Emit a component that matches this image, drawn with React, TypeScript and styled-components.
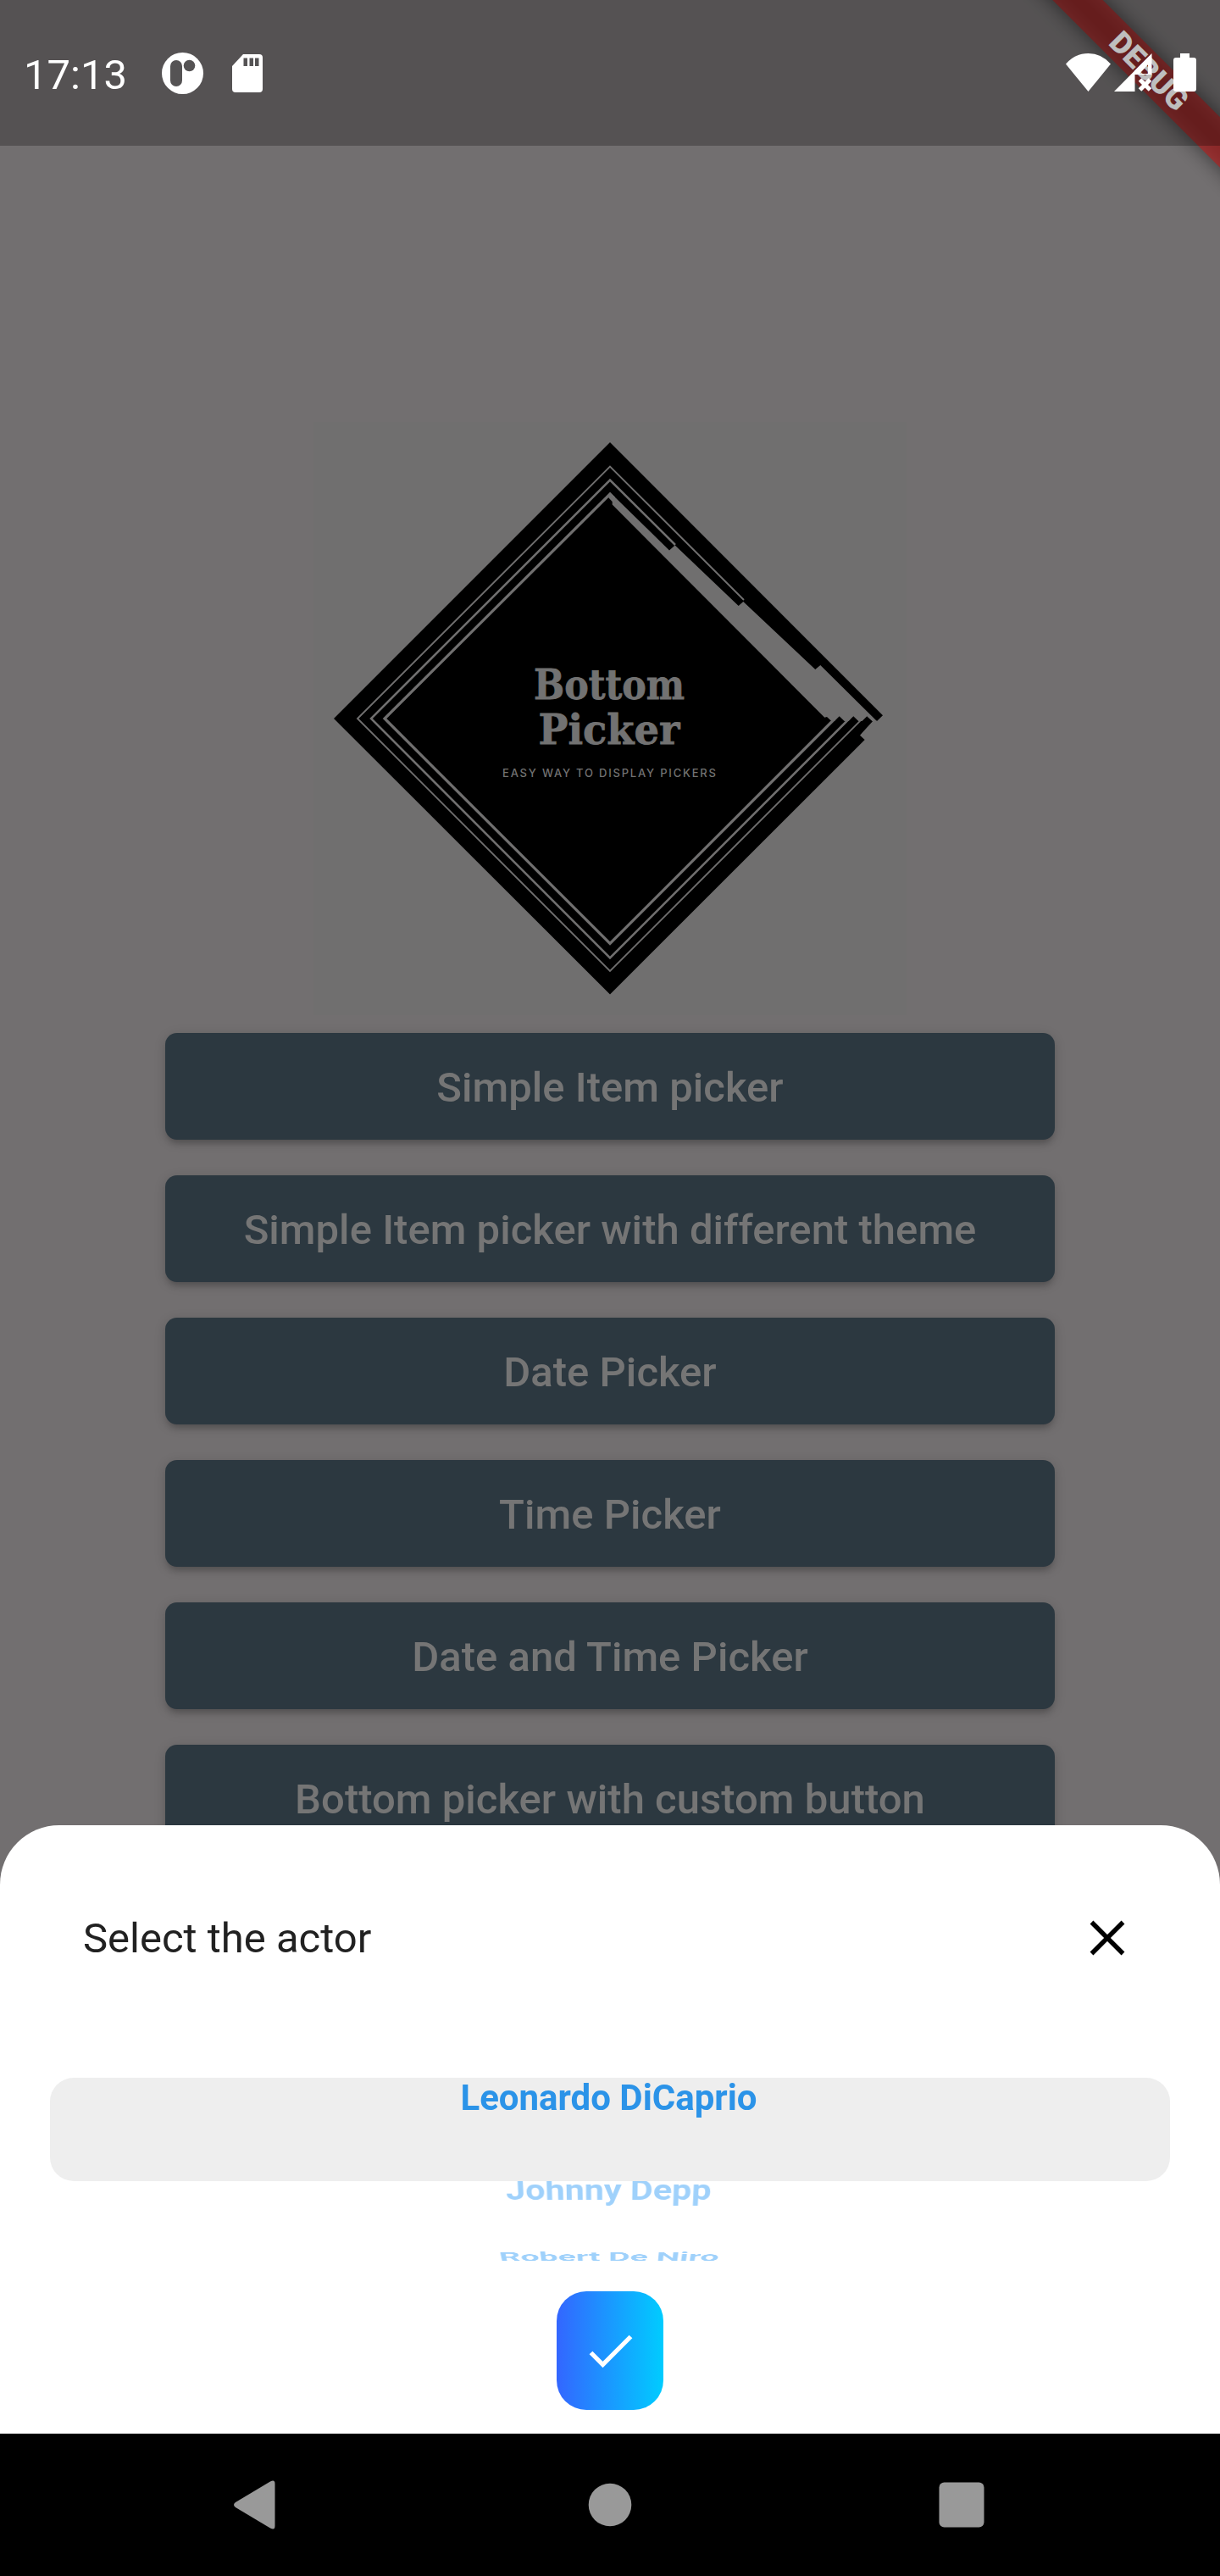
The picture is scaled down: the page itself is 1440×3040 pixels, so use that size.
import React from "react";
import styled, { createGlobalStyle, css } from "styled-components";

const GlobalStyle = createGlobalStyle`
  * { box-sizing: border-box; }
  body { margin: 0; background: #000; font-family: Roboto, sans-serif; }
`;

const Phone = styled.div`
  position: relative;
  display: flex;
  flex-direction: column;
  width: 1440px;
  height: 3040px;
  overflow: hidden;
  background: #726f70;
`;

const StatusBar = styled.header`
  position: relative;
  z-index: 2;
  display: flex;
  justify-content: space-between;
  flex: none;
  height: 172px;
  background: rgba(0, 0, 0, 0.254);
`;

const StatusGroup = styled.div`
  display: flex;
  align-items: center;
  height: 172px;
`;

const Clock = styled.time`
  margin-top: 5px;
  margin-left: 28px;
  width: 163px;
  color: #fff;
  font-size: 49px;
  line-height: 58px;
  white-space: nowrap;
`;

const StatusIcon = styled.svg<{ $gap: number }>`
  flex: none;
  display: block;
  margin-left: ${(p) => p.$gap}px;
`;

const DebugCorner = styled.div`
  position: absolute;
  top: 0;
  right: 0;
  z-index: 1;
  width: 300px;
  height: 300px;
  overflow: hidden;
`;

const DebugRibbon = styled.div`
  position: absolute;
  top: 63px;
  left: 6px;
  width: 420px;
  height: 42px;
  transform: rotate(45deg);

  &::before {
    content: "";
    position: absolute;
    inset: 0;
    background: rgba(0, 0, 0, 0.5);
    filter: blur(12px);
  }
`;

const DebugLabel = styled.div`
  position: relative;
  height: 42px;
  background: rgba(183, 28, 28, 0.627);
  color: #fff;
  font-size: 35.7px;
  font-weight: 900;
  line-height: 43px;
  text-align: center;
`;

const Page = styled.main`
  display: flex;
  flex-direction: column;
  align-items: center;
  flex: none;
  height: 1982px;
  padding-top: 326px;
  overflow: hidden;
`;

const Logo = styled.svg`
  display: block;
  flex: none;
  margin-bottom: 21px;
`;

const ButtonList = styled.div`
  display: flex;
  flex-direction: column;
  gap: 42px;
`;

const PickerButton = styled.button`
  flex: none;
  width: 1050px;
  height: 126px;
  padding: 3px 0 0;
  border: 0;
  border-radius: 14px;
  background: #2c3840;
  color: #757575;
  font: 500 49px/58px Roboto, sans-serif;
  letter-spacing: 0.03px;
  box-shadow: 0 7px 7px -3px rgba(0, 0, 0, 0.18), 0 3px 14px rgba(0, 0, 0, 0.16);
`;

const Sheet = styled.section`
  position: absolute;
  top: 2154px;
  left: 0;
  display: flex;
  flex-direction: column;
  align-items: center;
  width: 1440px;
  height: 718px;
  border-radius: 70px 70px 0 0;
  background: #fff;
`;

const SheetHeader = styled.div`
  display: flex;
  align-items: center;
  justify-content: space-between;
  flex: none;
  width: 100%;
  height: 298px;
  padding: 0 112px 30px 98px;
`;

const SheetTitle = styled.h2`
  margin: 0;
  color: #212121;
  font-size: 49px;
  font-weight: 400;
  line-height: 58px;
`;

const CloseIcon = styled.svg`
  display: block;
  margin-bottom: 2px;
`;

const Wheel = styled.div`
  display: flex;
  flex-direction: column;
  align-items: center;
  flex: none;
  width: 1322px;
  height: 218px;
`;

const SelectedBand = styled.div`
  position: relative;
  z-index: 1;
  width: 100%;
  height: 122px;
  flex: none;
  border-radius: 28px;
  background: #eeeeee;
`;

const actorText = css`
  padding-right: 3px;
  font-size: 42px;
  font-weight: 700;
  line-height: 48px;
  text-align: center;
  white-space: nowrap;
`;

const SelectedActor = styled.div`
  ${actorText}
  color: #2b93e8;
`;

const FadedBand = styled.div`
  display: flex;
  flex-direction: column;
  align-items: center;
  flex: none;
  width: 100%;
  height: 96px;
`;

const FadedActor = styled.div<{ $height: number; $tilt: number; $lift: number; $spread: number }>`
  ${actorText}
  flex: none;
  height: ${(p) => p.$height}px;
  margin-top: ${(p) => p.$lift}px;
  color: #9fd1fb;
  transform: scaleX(${(p) => p.$spread}) perspective(1550px) rotateX(-${(p) => p.$tilt}deg);
  transform-origin: 50% 0;
`;

const ConfirmButton = styled.button`
  display: flex;
  align-items: center;
  justify-content: center;
  flex: none;
  width: 126px;
  height: 140px;
  margin-top: 34px;
  padding: 1px 0 0 1px;
  border: 0;
  border-radius: 35px;
  background: linear-gradient(90deg, #3366ff, #00ccff);
`;

const NavBar = styled.nav`
  display: grid;
  grid-template-columns: 1fr auto 1fr;
  align-items: center;
  flex: none;
  height: 168px;
  margin-top: auto;
  padding: 0 273px;
  background: #000;
`;

const RecentsIcon = styled.svg`
  justify-self: end;
  margin-right: 5px;
`;

const BUTTONS = [
  "Simple Item picker",
  "Simple Item picker with different theme",
  "Date Picker",
  "Time Picker",
  "Date and Time Picker",
  "Bottom picker with custom button",
];

const LINE = "#706f6f";

const BottomPickerLogo = () => (
  <Logo width="700" height="700" viewBox="370 498 700 700">
    <rect x="370" y="498" width="700" height="700" fill={LINE} />
    <path
      d="M720 522L1042 844.300L1035 851L1023.300 845.300L1030 851.300L1015 867.700L1020.700 873L720 1173.500L394 848Z"
      fill="#000"
    />
    <g fill="none" stroke={LINE}>
      <path d="M878 708L720 550.500L422 848L720 1146L1019 847" strokeWidth="1.900" />
      <path d="M797 643L720 566.500L438 848L720 1130.500L1003 847.500" strokeWidth="2.500" />
      <path d="M725 588L720 583L454 848L720 1113.500L984.500 849" strokeWidth="3.200" />
    </g>
    <path
      d="M720 581L790 649.500L796.700 643.500L871.700 715L877.300 710L962.300 790L968.300 785L1035 851L1031 853L1030 851.300L1023.300 845.300L1017.500 851L1013.300 851L1007.300 845.300L1001.500 851L996.700 851L990.700 845.300L985 851L980.300 850L976 846L973.300 846.700L722.700 595.500L722.700 592L718 587Z"
      fill={LINE}
    />
    <g fill="#727272" textAnchor="middle">
      <g fontFamily="DejaVu Serif, serif" fontSize="48" fontWeight="700" stroke="#727272" strokeWidth="0.800">
        <text x="719" y="825" textLength="178" lengthAdjust="spacingAndGlyphs">Bottom</text>
        <text x="719" y="878" textLength="167" lengthAdjust="spacingAndGlyphs">Picker</text>
      </g>
      <text x="719" y="916.500" fontFamily="Inter, sans-serif" fontSize="13" fontWeight="500" textLength="252">
        EASY WAY TO DISPLAY PICKERS
      </text>
    </g>
  </Logo>
);

export default function App() {
  return (
    <>
      <GlobalStyle />
      <Phone>
        <StatusBar>
          <StatusGroup>
            <Clock>17:13</Clock>
            <StatusIcon $gap={0} width="50" height="49" viewBox="0 0 50 49">
              <circle cx="24.500" cy="24.500" r="24.500" fill="#fff" />
              <rect x="10" y="9" width="14" height="31" rx="7" fill="#555354" />
              <circle cx="32.500" cy="15.500" r="6.800" fill="#555354" />
            </StatusIcon>
            <StatusIcon $gap={33} width="36" height="45" viewBox="0 0 36 45">
              <path d="M13 0H32Q36 0 36 4V41Q36 45 32 45H4Q0 45 0 41V14Z" fill="#fff" />
              <path d="M13.500 4.500h4.500v9.500h-4.500zM20.500 4.500h4.500v9.500h-4.500zM27 4.500h4.500v9.500h-4.500z" fill="#555354" />
            </StatusIcon>
          </StatusGroup>
          <StatusGroup>
            <StatusIcon $gap={0} width="53" height="46" viewBox="0 0 53 46">
              <path d="M0 12.500Q11 0 26.500 0T53 12.500L26.500 45Z" fill="#fff" />
            </StatusIcon>
            <StatusIcon $gap={4} width="45" height="46" viewBox="0 0 45 46">
              <path d="M44.500 0V25H24.500V45H0ZM40 13L30 24H40Z" fill="#fff" fillRule="evenodd" />
              <path d="M30.500 31L42.500 43M42.500 31L30.500 43" stroke="#fff" strokeWidth="5" />
            </StatusIcon>
            <StatusIcon $gap={25} width="55" height="46" viewBox="0 0 55 46">
              <path d="M8 0H19V5H24Q27 5 27 8V42Q27 45 24 45H3Q0 45 0 42V8Q0 5 3 5H8Z" fill="#fff" />
            </StatusIcon>
          </StatusGroup>
        </StatusBar>
        <DebugCorner>
          <DebugRibbon>
            <DebugLabel>DEBUG</DebugLabel>
          </DebugRibbon>
        </DebugCorner>
        <Page>
          <BottomPickerLogo />
          <ButtonList>
            {BUTTONS.map((label) => (
              <PickerButton key={label}>{label}</PickerButton>
            ))}
          </ButtonList>
        </Page>
        <Sheet>
          <SheetHeader>
            <SheetTitle>Select the actor</SheetTitle>
            <CloseIcon width="42" height="42" viewBox="0 0 42 42">
              <path d="M2.500 2.500L39.500 39.500M39.500 2.500L2.500 39.500" stroke="#000" strokeWidth="5.500" />
            </CloseIcon>
          </SheetHeader>
          <Wheel>
            <SelectedBand>
              <SelectedActor>Leonardo DiCaprio</SelectedActor>
            </SelectedBand>
            <FadedBand>
              <FadedActor $height={79} $lift={-8} $tilt={37} $spread={0.993}>Johnny Depp</FadedActor>
              <FadedActor $height={48} $lift={10} $tilt={69} $spread={0.948}>Robert De Niro</FadedActor>
            </FadedBand>
          </Wheel>
          <ConfirmButton aria-label="Confirm">
            <svg width="52" height="40" viewBox="0 0 52 40">
              <path d="M2.500 21.500L16.500 35.500L49.500 2.500" fill="none" stroke="#fff" strokeWidth="5.300" />
            </svg>
          </ConfirmButton>
        </Sheet>
        <NavBar>
          <svg width="52" height="58" viewBox="0 0 52 58">
            <path d="M5 26L46 1.500Q51.500 -1.500 51.500 4V54Q51.500 59.500 46 56.500L5 32Q1 29 5 26Z" fill="#999" />
          </svg>
          <svg width="52" height="52" viewBox="0 0 52 52">
            <circle cx="26" cy="26" r="25.300" fill="#999" />
          </svg>
          <RecentsIcon width="54" height="54" viewBox="0 0 54 54">
            <rect x="0.500" y="0.500" width="53" height="53" rx="6" fill="#999" />
          </RecentsIcon>
        </NavBar>
      </Phone>
    </>
  );
}
